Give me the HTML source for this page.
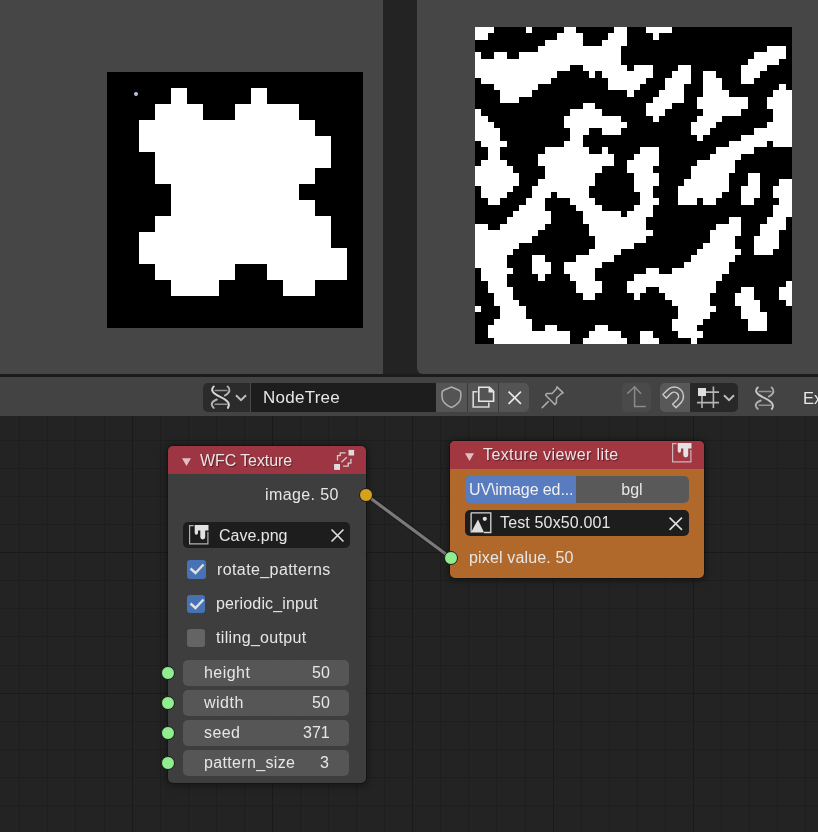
<!DOCTYPE html>
<html><head><meta charset="utf-8">
<style>
html,body{margin:0;padding:0;}
body{width:818px;height:832px;overflow:hidden;position:relative;background:#232323;font-family:"Liberation Sans", sans-serif;}
.a{position:absolute;box-sizing:border-box;}
.t{position:absolute;white-space:pre;font-family:"Liberation Sans", sans-serif;will-change:transform;}
svg{position:absolute;display:block;overflow:visible;}
</style></head><body>
<div class="a" style="left:0;top:0;width:383px;height:374px;background:#464646;"></div>
<svg style="left:107px;top:72px" width="256" height="256" viewBox="0 0 16 16" shape-rendering="crispEdges"><rect width="16" height="16" fill="#000"/><path fill="#fff" d="M4 1h1v1h-1zM9 1h1v1h-1zM3 2h3v1h-3zM8 2h4v1h-4zM2 3h11v1h-11zM2 4h12v1h-12zM3 5h11v1h-11zM3 6h10v1h-10zM4 7h8v1h-8zM4 8h9v1h-9zM3 9h11v1h-11zM2 10h12v1h-12zM2 11h13v1h-13zM3 12h5v1h-5zM10 12h5v1h-5zM4 13h3v1h-3zM11 13h2v1h-2z"/></svg>
<div class="a" style="left:134px;top:92px;width:4px;height:4px;border-radius:50%;background:#b8c4dc;"></div>
<div class="a" style="left:417px;top:0;width:401px;height:374px;background:#464646;border-bottom-left-radius:6px;"></div>
<svg style="left:475px;top:27px" width="317" height="317" viewBox="0 0 50 50" shape-rendering="crispEdges"><rect width="50" height="50" fill="#000"/><path fill="#fff" d="M0 0h3v1h-3zM8 0h1v1h-1zM14 0h2v1h-2zM22 0h2v1h-2zM27 0h4v1h-4zM0 1h2v1h-2zM13 1h4v1h-4zM21 1h3v1h-3zM28 1h1v1h-1zM11 2h6v1h-6zM20 2h4v1h-4zM10 3h13v1h-13zM46 3h3v1h-3zM0 4h1v1h-1zM3 4h2v1h-2zM7 4h16v1h-16zM44 4h5v1h-5zM0 5h23v1h-23zM43 5h5v1h-5zM0 6h15v1h-15zM17 6h7v1h-7zM25 6h3v1h-3zM32 6h2v1h-2zM42 6h4v1h-4zM0 7h13v1h-13zM18 7h1v1h-1zM20 7h8v1h-8zM31 7h3v1h-3zM36 7h2v1h-2zM42 7h3v1h-3zM1 8h11v1h-11zM21 8h6v1h-6zM30 8h4v1h-4zM36 8h3v1h-3zM42 8h2v1h-2zM3 9h7v1h-7zM21 9h5v1h-5zM30 9h3v1h-3zM36 9h3v1h-3zM48 9h1v1h-1zM4 10h5v1h-5zM24 10h1v1h-1zM29 10h4v1h-4zM36 10h4v1h-4zM47 10h3v1h-3zM4 11h3v1h-3zM28 11h5v1h-5zM35 11h8v1h-8zM46 11h4v1h-4zM17 12h2v1h-2zM27 12h4v1h-4zM35 12h8v1h-8zM46 12h4v1h-4zM0 13h1v1h-1zM15 13h5v1h-5zM27 13h3v1h-3zM36 13h6v1h-6zM47 13h3v1h-3zM0 14h2v1h-2zM14 14h9v1h-9zM28 14h1v1h-1zM35 14h4v1h-4zM47 14h3v1h-3zM0 15h3v1h-3zM14 15h10v1h-10zM34 15h4v1h-4zM46 15h4v1h-4zM0 16h4v1h-4zM15 16h3v1h-3zM20 16h3v1h-3zM34 16h3v1h-3zM44 16h6v1h-6zM0 17h4v1h-4zM15 17h2v1h-2zM35 17h1v1h-1zM42 17h8v1h-8zM1 18h4v1h-4zM14 18h3v1h-3zM40 18h6v1h-6zM47 18h3v1h-3zM2 19h2v1h-2zM11 19h7v1h-7zM20 19h1v1h-1zM26 19h3v1h-3zM38 19h6v1h-6zM2 20h2v1h-2zM10 20h12v1h-12zM25 20h4v1h-4zM37 20h5v1h-5zM1 21h4v1h-4zM10 21h12v1h-12zM24 21h5v1h-5zM35 21h6v1h-6zM0 22h6v1h-6zM11 22h9v1h-9zM24 22h4v1h-4zM34 22h7v1h-7zM0 23h7v1h-7zM11 23h8v1h-8zM25 23h4v1h-4zM34 23h6v1h-6zM43 23h2v1h-2zM0 24h7v1h-7zM10 24h9v1h-9zM25 24h4v1h-4zM33 24h7v1h-7zM43 24h2v1h-2zM48 24h2v1h-2zM1 25h5v1h-5zM9 25h9v1h-9zM25 25h3v1h-3zM32 25h8v1h-8zM42 25h3v1h-3zM47 25h3v1h-3zM1 26h4v1h-4zM9 26h3v1h-3zM13 26h5v1h-5zM26 26h2v1h-2zM32 26h7v1h-7zM42 26h3v1h-3zM47 26h3v1h-3zM2 27h2v1h-2zM8 27h3v1h-3zM15 27h4v1h-4zM26 27h3v1h-3zM32 27h3v1h-3zM36 27h2v1h-2zM42 27h2v1h-2zM48 27h2v1h-2zM7 28h4v1h-4zM16 28h4v1h-4zM25 28h3v1h-3zM47 28h3v1h-3zM6 29h6v1h-6zM17 29h6v1h-6zM24 29h4v1h-4zM47 29h3v1h-3zM5 30h7v1h-7zM17 30h10v1h-10zM40 30h2v1h-2zM46 30h3v1h-3zM0 31h2v1h-2zM4 31h7v1h-7zM18 31h9v1h-9zM38 31h4v1h-4zM45 31h4v1h-4zM0 32h10v1h-10zM18 32h10v1h-10zM37 32h5v1h-5zM45 32h3v1h-3zM0 33h9v1h-9zM19 33h8v1h-8zM37 33h4v1h-4zM44 33h4v1h-4zM0 34h7v1h-7zM19 34h6v1h-6zM36 34h5v1h-5zM44 34h4v1h-4zM0 35h6v1h-6zM18 35h5v1h-5zM35 35h7v1h-7zM44 35h3v1h-3zM0 36h5v1h-5zM9 36h2v1h-2zM16 36h6v1h-6zM34 36h7v1h-7zM0 37h5v1h-5zM9 37h3v1h-3zM14 37h6v1h-6zM33 37h7v1h-7zM1 38h5v1h-5zM9 38h3v1h-3zM14 38h5v1h-5zM27 38h2v1h-2zM31 38h9v1h-9zM1 39h4v1h-4zM10 39h1v1h-1zM15 39h4v1h-4zM25 39h14v1h-14zM2 40h3v1h-3zM16 40h4v1h-4zM24 40h14v1h-14zM49 40h1v1h-1zM2 41h4v1h-4zM16 41h4v1h-4zM24 41h3v1h-3zM29 41h9v1h-9zM42 41h2v1h-2zM48 41h2v1h-2zM3 42h3v1h-3zM17 42h2v1h-2zM25 42h1v1h-1zM30 42h7v1h-7zM41 42h3v1h-3zM48 42h2v1h-2zM3 43h4v1h-4zM31 43h6v1h-6zM41 43h4v1h-4zM49 43h1v1h-1zM0 44h1v1h-1zM4 44h4v1h-4zM32 44h6v1h-6zM42 44h3v1h-3zM4 45h4v1h-4zM32 45h5v1h-5zM42 45h4v1h-4zM3 46h6v1h-6zM31 46h5v1h-5zM43 46h3v1h-3zM2 47h7v1h-7zM11 47h2v1h-2zM19 47h2v1h-2zM31 47h4v1h-4zM43 47h3v1h-3zM2 48h13v1h-13zM18 48h5v1h-5zM26 48h2v1h-2zM32 48h4v1h-4zM3 49h12v1h-12zM17 49h7v1h-7zM26 49h3v1h-3zM34 49h1v1h-1z"/></svg>
<div class="a" style="left:0;top:374px;width:818px;height:3px;background:#1c1c1c;"></div>

<div class="a" style="left:0;top:377px;width:818px;height:39px;background:#434343;"></div>
<div class="a" style="left:203px;top:383px;width:48px;height:29px;background:#2b2b2b;border-radius:5px 0 0 5px;"></div>
<svg style="left:208px;top:384px" width="26" height="27" viewBox="0 0 26 27" fill="none" stroke-linecap="round">
<path d="M5.8 2.4 C2.6 5.6 3.5 8.8 12.2 12.8 C20.9 16.8 22.2 20.5 19.9 23.9" stroke="#d8d8d8" stroke-width="1.9"/>
<path d="M19.6 2.4 C22.5 5 22.5 8.5 16.9 11.5" stroke="#d8d8d8" stroke-width="1.9" opacity="0.8"/>
<path d="M8.8 15.5 C3 17.5 2.5 21 5.8 23.9" stroke="#d8d8d8" stroke-width="1.9" opacity="0.8"/>
<path d="M7.1 6.4 H18.9 M7.1 20.2 H18.9" stroke="#d8d8d8" stroke-width="1.5" opacity="0.6"/>
</svg>
<svg style="left:235px;top:394px" width="12" height="8" viewBox="0 0 12 8" fill="none"><path d="M1 1.2 L6 6.2 L11 1.2" stroke="#bdbdbd" stroke-width="2"/></svg>
<div class="a" style="left:250px;top:383px;width:1px;height:29px;background:#474747;"></div>
<div class="a" style="left:251px;top:383px;width:185px;height:29px;background:#1d1d1d;"></div>
<div class="t" style="left:262.5px;top:389.21px;font-size:17px;line-height:17px;color:#e6e6e6;letter-spacing:0.25px;">NodeTree</div>
<div class="a" style="left:436px;top:383px;width:93px;height:29px;background:#545454;border-radius:0 5px 5px 0;"></div>
<div class="a" style="left:467px;top:383px;width:1px;height:29px;background:#3a3a3a;"></div>
<div class="a" style="left:498px;top:383px;width:1px;height:29px;background:#3a3a3a;"></div>
<svg style="left:440px;top:386px" width="23" height="23" viewBox="0 0 23 23"><path d="M11.4 1 L18 3.8 Q20.8 4.8 20.8 7 V10.5 Q20.8 17.5 11.4 21.5 Q2 17.5 2 10.5 V7 Q2 4.8 4.8 3.8 Z" fill="none" stroke="#b0b0b0" stroke-width="1.5"/></svg>
<svg style="left:471px;top:386px" width="24" height="23" viewBox="0 0 24 23"><path d="M6.5 5.8 H2.2 V21 H17.8 V16.5" fill="none" stroke="#d8d8d8" stroke-width="1.6"/><path d="M7.8 1.2 H18.5 L22.6 5.3 V15.2 H7.8 Z" fill="none" stroke="#e6e6e6" stroke-width="1.6"/><path d="M17.5 1 L23 6.5 H17.5 Z" fill="#e6e6e6"/></svg>
<svg style="left:507.5px;top:390.5px" width="13.5" height="13.5" viewBox="0 0 12 12"><path d="M0.5 0.5 L11.5 11.5 M11.5 0.5 L0.5 11.5" stroke="#e6e6e6" stroke-width="1.51"/></svg>
<svg style="left:540px;top:385px" width="26" height="25" viewBox="0 0 26 25" fill="none" stroke="#ababab" stroke-width="1.5" stroke-linejoin="round"><path d="M16.97 1.85 L23.17 7.84 L21.25 8.69 L16.54 12.97 L16.33 18.11 L15.04 19.6 L5.63 10.19 L6.7 8.48 L12.05 8.48 L16.54 3.77 Z"/><path d="M8.2 16.6 L2.2 22.6" stroke-linecap="round"/></svg>
<div class="a" style="left:622px;top:383px;width:29px;height:29px;background:#4a4a4a;border-radius:5px;"></div>
<svg style="left:622px;top:383px" width="29" height="29" viewBox="0 0 29 29" fill="none" stroke="#8a8a8a" stroke-width="1.5"><path d="M12.6 3.8 V23.4 H23.8"/><path d="M5.2 10.7 L12.6 3.8 L19 10.7"/></svg>
<div class="a" style="left:660px;top:383px;width:30px;height:29px;background:#585858;border-radius:5px 0 0 5px;"></div>
<svg style="left:660px;top:383px" width="30" height="29" viewBox="0 0 30 29" fill="none" stroke="#c8c8c8" stroke-width="1.4" stroke-linejoin="round"><path transform="translate(15 14.5) scale(1.1) translate(-15 -17)" d="M4 14.3 L7.1 17.6 L11.5 13.2 A4 4 0 0 1 17.2 18.8 L12.8 23.2 L15.9 26.3 L20.3 21.9 A8.4 8.4 0 0 0 8.4 10 Z"/></svg>
<div class="a" style="left:690px;top:383px;width:48px;height:29px;background:#282828;border-radius:0 5px 5px 0;"></div>
<svg style="left:690px;top:383px" width="48" height="29" viewBox="0 0 48 29"><rect x="8" y="5" width="8" height="8" fill="#dedede"/><path d="M12 13 V25 M23.4 3.5 V25 M16 9.1 H29 M7 19.6 H29" stroke="#b4b4b4" stroke-width="1.6" fill="none"/></svg>
<svg style="left:723px;top:394px" width="12" height="8" viewBox="0 0 12 8" fill="none"><path d="M1 1.2 L6 6.2 L11 1.2" stroke="#bdbdbd" stroke-width="2"/></svg>
<svg style="left:751.5px;top:384.5px" width="26" height="27" viewBox="0 0 26 27" fill="none" stroke-linecap="round">
<path d="M5.8 2.4 C2.6 5.6 3.5 8.8 12.2 12.8 C20.9 16.8 22.2 20.5 19.9 23.9" stroke="#c8c8c8" stroke-width="1.9"/>
<path d="M19.6 2.4 C22.5 5 22.5 8.5 16.9 11.5" stroke="#c8c8c8" stroke-width="1.9" opacity="0.8"/>
<path d="M8.8 15.5 C3 17.5 2.5 21 5.8 23.9" stroke="#c8c8c8" stroke-width="1.9" opacity="0.8"/>
<path d="M7.1 6.4 H18.9 M7.1 20.2 H18.9" stroke="#c8c8c8" stroke-width="1.5" opacity="0.6"/>
</svg>
<div class="t" style="left:803px;top:389.83px;font-size:16.5px;line-height:16.5px;color:#e6e6e6;">Ex</div>

<div class="a" style="left:0;top:416px;width:818px;height:416px;background:#232323;"></div>
<svg style="left:0;top:416px" width="818" height="416" shape-rendering="crispEdges"><rect x="19" y="0" width="1" height="416" fill="#1e1e1e"/><rect x="47" y="0" width="1" height="416" fill="#1e1e1e"/><rect x="75" y="0" width="1" height="416" fill="#1e1e1e"/><rect x="104" y="0" width="1" height="416" fill="#1e1e1e"/><rect x="132" y="0" width="1" height="416" fill="#1a1a1a"/><rect x="160" y="0" width="1" height="416" fill="#1e1e1e"/><rect x="188" y="0" width="1" height="416" fill="#1e1e1e"/><rect x="216" y="0" width="1" height="416" fill="#1e1e1e"/><rect x="244" y="0" width="1" height="416" fill="#1e1e1e"/><rect x="272" y="0" width="1" height="416" fill="#1a1a1a"/><rect x="300" y="0" width="1" height="416" fill="#1e1e1e"/><rect x="328" y="0" width="1" height="416" fill="#1e1e1e"/><rect x="356" y="0" width="1" height="416" fill="#1e1e1e"/><rect x="384" y="0" width="1" height="416" fill="#1e1e1e"/><rect x="412" y="0" width="1" height="416" fill="#1a1a1a"/><rect x="440" y="0" width="1" height="416" fill="#1e1e1e"/><rect x="468" y="0" width="1" height="416" fill="#1e1e1e"/><rect x="496" y="0" width="1" height="416" fill="#1e1e1e"/><rect x="525" y="0" width="1" height="416" fill="#1e1e1e"/><rect x="553" y="0" width="1" height="416" fill="#1a1a1a"/><rect x="581" y="0" width="1" height="416" fill="#1e1e1e"/><rect x="609" y="0" width="1" height="416" fill="#1e1e1e"/><rect x="637" y="0" width="1" height="416" fill="#1e1e1e"/><rect x="665" y="0" width="1" height="416" fill="#1e1e1e"/><rect x="693" y="0" width="1" height="416" fill="#1a1a1a"/><rect x="721" y="0" width="1" height="416" fill="#1e1e1e"/><rect x="749" y="0" width="1" height="416" fill="#1e1e1e"/><rect x="777" y="0" width="1" height="416" fill="#1e1e1e"/><rect x="805" y="0" width="1" height="416" fill="#1e1e1e"/><rect x="0" y="24" width="818" height="1" fill="#1e1e1e"/><rect x="0" y="52" width="818" height="1" fill="#1e1e1e"/><rect x="0" y="80" width="818" height="1" fill="#1e1e1e"/><rect x="0" y="108" width="818" height="1" fill="#1e1e1e"/><rect x="0" y="136" width="818" height="1" fill="#1a1a1a"/><rect x="0" y="164" width="818" height="1" fill="#1e1e1e"/><rect x="0" y="192" width="818" height="1" fill="#1e1e1e"/><rect x="0" y="220" width="818" height="1" fill="#1e1e1e"/><rect x="0" y="249" width="818" height="1" fill="#1e1e1e"/><rect x="0" y="277" width="818" height="1" fill="#1a1a1a"/><rect x="0" y="305" width="818" height="1" fill="#1e1e1e"/><rect x="0" y="333" width="818" height="1" fill="#1e1e1e"/><rect x="0" y="361" width="818" height="1" fill="#1e1e1e"/><rect x="0" y="389" width="818" height="1" fill="#1e1e1e"/></svg>
<svg style="left:0;top:0" width="818" height="832"><path d="M365.5 494.5 L450.5 557.5" stroke="#1a1a1a" stroke-width="5"/><path d="M365.5 494.5 L450.5 557.5" stroke="#7a7a7a" stroke-width="3.2"/></svg>

<div class="a" style="left:167px;top:445px;width:200px;height:339px;border-radius:6px;background:rgba(10,10,10,0.55);box-shadow:0 1px 7px 1px rgba(0,0,0,0.35);"></div>
<div class="a" style="left:168px;top:446px;width:198px;height:337px;border-radius:5px;background:rgba(65,65,65,0.94);overflow:hidden;">
  <div class="a" style="left:0;top:0;width:198px;height:28px;background:rgba(161,53,66,0.97);"></div>
</div>
<svg style="left:181px;top:457px" width="11" height="10" viewBox="0 0 11 10"><path d="M1 1.2 H10 L5.5 9 Z" fill="rgba(235,215,218,0.85)"/></svg>
<div class="t" style="left:199.9px;top:452.66px;font-size:16px;line-height:16px;color:#ece4e5;text-shadow:1px 1px 1px rgba(0,0,0,0.45);letter-spacing:-0.1px;">WFC Texture</div>
<svg style="left:332px;top:448px" width="24" height="24" viewBox="0 0 24 24"><rect x="2.1" y="16" width="5.9" height="5.9" fill="#dcdcdc"/><rect x="16.5" y="1.9" width="5.6" height="5.6" fill="#dcdcdc"/><path d="M5.5 12.6 V7.7 H8.2 V4.8 H13.6" fill="none" stroke="#d0d0d0" stroke-width="1.3"/><path d="M18.9 10.7 V15.1 H16.2 V18.2 H11.1" fill="none" stroke="#d0d0d0" stroke-width="1.3"/><path d="M9.4 14.3 L14.8 9.2" stroke="#d0d0d0" stroke-width="1.3"/></svg>
<div class="t" style="right:479.6px;top:486.86px;font-size:16px;line-height:16px;color:#e6e6e6;letter-spacing:0.4px;">image. 50</div>
<div class="a" style="left:183px;top:522px;width:167px;height:26px;background:#1d1d1d;border-radius:5px;"></div>
<svg style="left:188.8px;top:524.7px" width="21" height="21" viewBox="0 0 21 21">
<path d="M4.6 0.6 H0.6 V18.9 H18.9 V7" fill="none" stroke="rgba(215,215,215,0.8)" stroke-width="1.2"/>
<path d="M5.7 0 H19.5 V5.6 H16.2 V12 A2.45 2.45 0 0 1 11.3 12 V5.6 H9 V8 A1.65 1.65 0 0 1 5.7 8 Z" fill="#e2e2e2"/>
</svg>
<div class="t" style="left:218.6px;top:527.66px;font-size:16px;line-height:16px;color:#e6e6e6;">Cave.png</div>
<svg style="left:330.5px;top:529px" width="13" height="13" viewBox="0 0 12 12"><path d="M0.5 0.5 L11.5 11.5 M11.5 0.5 L0.5 11.5" stroke="#e0e0e0" stroke-width="1.48"/></svg>
<div class="a" style="left:187px;top:560px;width:19px;height:19px;border-radius:3px;background:#4772b3;"><svg style="left:2px;top:3px" width="16" height="12" viewBox="0 0 16 12"><path d="M1.5 5.5 L6.5 10 L14.5 1.5" fill="none" stroke="#e0e0e0" stroke-width="2.4"/></svg></div>
<div class="t" style="left:217.3px;top:562.36px;font-size:16px;line-height:16px;color:#e6e6e6;letter-spacing:0.4px;">rotate_patterns</div>
<div class="a" style="left:187px;top:595px;width:18px;height:18px;border-radius:3px;background:#4772b3;"><svg style="left:2px;top:3px" width="16" height="12" viewBox="0 0 16 12"><path d="M1.5 5.5 L6.5 10 L14.5 1.5" fill="none" stroke="#e0e0e0" stroke-width="2.4"/></svg></div>
<div class="t" style="left:215.6px;top:596.26px;font-size:16px;line-height:16px;color:#e6e6e6;letter-spacing:0.15px;">periodic_input</div>
<div class="a" style="left:187px;top:629px;width:18px;height:18px;border-radius:3px;background:#646464;"></div>
<div class="t" style="left:215.6px;top:630.46px;font-size:16px;line-height:16px;color:#e6e6e6;letter-spacing:0.33px;">tiling_output</div>
<div class="a" style="left:183px;top:660px;width:166px;height:26px;background:#565656;border-radius:5px;"></div>
<div class="t" style="left:204.2px;top:665.16px;font-size:16px;line-height:16px;color:#e6e6e6;letter-spacing:0.45px;">height</div>
<div class="t" style="right:488.7px;top:665.16px;font-size:16px;line-height:16px;color:#e6e6e6;">50</div>
<div class="a" style="left:161px;top:665.5px;width:14px;height:14px;border-radius:50%;background:#90ee90;border:1px solid #1a1a1a;"></div>
<div class="a" style="left:183px;top:690px;width:166px;height:26px;background:#565656;border-radius:5px;"></div>
<div class="t" style="left:204.2px;top:695.16px;font-size:16px;line-height:16px;color:#e6e6e6;letter-spacing:0.5px;">width</div>
<div class="t" style="right:488.7px;top:695.16px;font-size:16px;line-height:16px;color:#e6e6e6;">50</div>
<div class="a" style="left:161px;top:695.5px;width:14px;height:14px;border-radius:50%;background:#90ee90;border:1px solid #1a1a1a;"></div>
<div class="a" style="left:183px;top:720px;width:166px;height:26px;background:#565656;border-radius:5px;"></div>
<div class="t" style="left:204.2px;top:725.16px;font-size:16px;line-height:16px;color:#e6e6e6;letter-spacing:0.4px;">seed</div>
<div class="t" style="right:488.7px;top:725.16px;font-size:16px;line-height:16px;color:#e6e6e6;">371</div>
<div class="a" style="left:161px;top:725.5px;width:14px;height:14px;border-radius:50%;background:#90ee90;border:1px solid #1a1a1a;"></div>
<div class="a" style="left:183px;top:750px;width:166px;height:26px;background:#565656;border-radius:5px;"></div>
<div class="t" style="left:204.2px;top:755.16px;font-size:16px;line-height:16px;color:#e6e6e6;letter-spacing:0.35px;">pattern_size</div>
<div class="t" style="right:488.7px;top:755.16px;font-size:16px;line-height:16px;color:#e6e6e6;">3</div>
<div class="a" style="left:161px;top:755.5px;width:14px;height:14px;border-radius:50%;background:#90ee90;border:1px solid #1a1a1a;"></div>

<div class="a" style="left:358.5px;top:487.5px;width:14px;height:14px;border-radius:50%;background:#d4a21c;border:1px solid #1a1a1a;"></div>

<div class="a" style="left:449px;top:440px;width:256px;height:139px;border-radius:6px;background:rgba(10,10,10,0.55);box-shadow:0 1px 7px 1px rgba(0,0,0,0.35);"></div>
<div class="a" style="left:450px;top:441px;width:254px;height:137px;border-radius:5px;background:#b1692b;overflow:hidden;">
  <div class="a" style="left:0;top:0;width:254px;height:28px;background:rgba(161,53,66,0.97);"></div>
</div>
<svg style="left:463.5px;top:451.5px" width="11" height="10" viewBox="0 0 11 10"><path d="M1 1.2 H10 L5.5 9 Z" fill="rgba(235,215,218,0.85)"/></svg>
<div class="t" style="left:482.8px;top:446.66px;font-size:16px;line-height:16px;color:#ece4e5;text-shadow:1px 1px 1px rgba(0,0,0,0.45);letter-spacing:0.4px;">Texture viewer lite</div>
<svg style="left:671.5px;top:443.3px" width="21" height="21" viewBox="0 0 21 21">
<path d="M4.6 0.6 H0.6 V18.9 H18.9 V7" fill="none" stroke="rgba(215,215,215,0.8)" stroke-width="1.2"/>
<path d="M5.7 0 H19.5 V5.6 H16.2 V12 A2.45 2.45 0 0 1 11.3 12 V5.6 H9 V8 A1.65 1.65 0 0 1 5.7 8 Z" fill="#e2e2e2"/>
</svg>
<div class="a" style="left:465px;top:475.5px;width:224px;height:27px;background:#595959;border-radius:5px;overflow:hidden;"><div class="a" style="left:0;top:0;width:111px;height:27px;background:#587cbf;"></div></div>
<div class="t" style="left:468.6px;top:481.66px;font-size:16px;line-height:16px;color:#f0f0f0;letter-spacing:-0.1px;">UV\image ed...</div>
<div class="t" style="left:432px;width:400px;text-align:center;top:481.66px;font-size:16px;line-height:16px;color:#e6e6e6;">bgl</div>
<div class="a" style="left:465px;top:510px;width:224px;height:26px;background:#1d1d1d;border-radius:5px;"></div>
<svg style="left:470px;top:512px" width="22" height="22" viewBox="0 0 22 22"><path d="M1.1 0.8 H20.8 V20.5 H14" fill="none" stroke="#d8d8d8" stroke-width="1.3"/><path d="M1.1 0.8 V20.5" fill="none" stroke="#d8d8d8" stroke-width="1.3"/><path d="M1 20.6 L8 7.6 L14 20.6 Z" fill="#dedede"/><circle cx="14.8" cy="6.8" r="2.1" fill="#dedede"/></svg>
<div class="t" style="left:500.2px;top:514.96px;font-size:16px;line-height:16px;color:#e6e6e6;letter-spacing:0.15px;">Test 50x50.001</div>
<svg style="left:669px;top:516.5px" width="13.5" height="13.5" viewBox="0 0 12 12"><path d="M0.5 0.5 L11.5 11.5 M11.5 0.5 L0.5 11.5" stroke="#e0e0e0" stroke-width="1.42"/></svg>
<div class="t" style="left:468.9px;top:550.46px;font-size:16px;line-height:16px;color:#e6e6e6;letter-spacing:0.15px;">pixel value. 50</div>

<div class="a" style="left:443.5px;top:550.5px;width:14px;height:14px;border-radius:50%;background:#90ee90;border:1px solid #1a1a1a;"></div>
</body></html>
